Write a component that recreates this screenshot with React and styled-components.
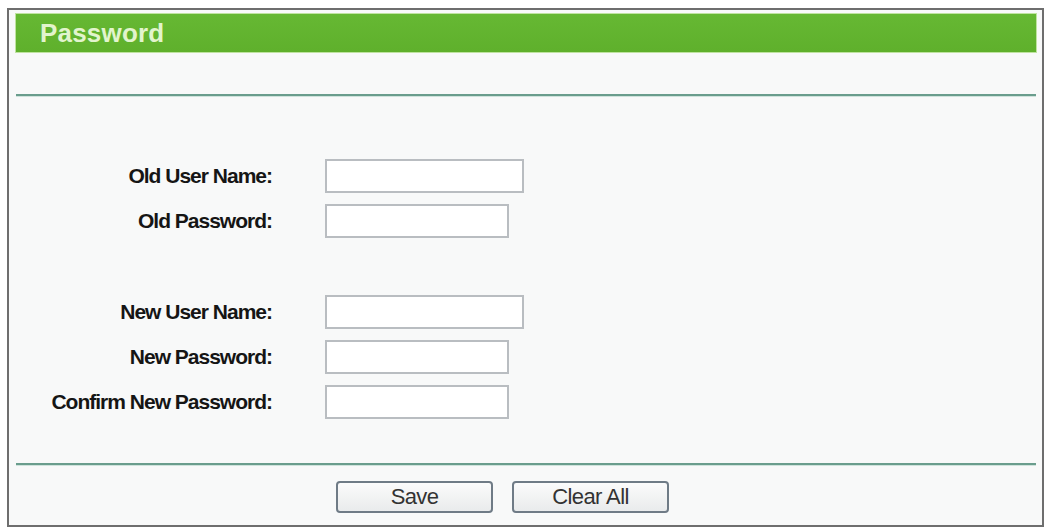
import React from "react";
import styled, { createGlobalStyle } from "styled-components";

const Global = createGlobalStyle`
  html, body { margin: 0; padding: 0; background: #ffffff; }
  body { font-family: "Liberation Sans", Arial, sans-serif; }
`;

const Page = styled.div`
  padding: 8px 4px 2px 7px;
`;

const Panel = styled.div`
  box-sizing: border-box;
  width: 1037px;
  height: 519px;
  border: 2px solid #6e6e6e;
  background: #f8f9f9;
  padding: 4px 6px 12px 7px;
  display: flex;
  flex-direction: column;
`;

const Header = styled.div`
  height: 38px;
  background: linear-gradient(#66b833, #5fb02c);
  box-shadow: 0 0 0 1px #bfe3a0;
  display: flex;
  align-items: center;
  padding-left: 24px;
  font-size: 26px;
  font-weight: bold;
  color: #e2f4cd;
  letter-spacing: 0.2px;
`;

const Divider = styled.div`
  height: 2px;
  background: #6a9d8d;
  box-shadow: 0 1px 0 #cfe3dc;
  margin-top: ${(p) => p.$top}px;
`;

const Form = styled.div`
  margin-top: 63px;
  display: grid;
  grid-template-columns: 256px auto;
  column-gap: 53px;
  row-gap: 11px;
  align-items: center;
`;

const Label = styled.div`
  text-align: right;
  font-size: 21px;
  font-weight: bold;
  color: #151515;
  letter-spacing: -1px;
  margin-top: ${(p) => p.$gap || 0}px;
`;

const Field = styled.input`
  box-sizing: border-box;
  width: ${(p) => p.$w}px;
  height: 34px;
  border: 2px solid #b9bdc1;
  background: #ffffff;
  margin: ${(p) => p.$gap || 0}px 0 0 0;
  padding: 0 4px;
  outline: none;
`;

const ButtonRow = styled.div`
  margin-top: 16px;
  padding-left: 320px;
  display: flex;
  gap: 19px;
`;

const Button = styled.button`
  box-sizing: border-box;
  width: 157px;
  height: 32px;
  border: 2px solid #6f7b86;
  border-radius: 4px;
  background: linear-gradient(#fbfbfb, #e9ebec);
  font-family: "Liberation Sans", Arial, sans-serif;
  font-size: 22px;
  color: #333;
  letter-spacing: -0.6px;
  padding: 0;
`;

const groups = [
  [
    { label: "Old User Name:", w: 199 },
    { label: "Old Password:", w: 184 },
  ],
  [
    { label: "New User Name:", w: 199 },
    { label: "New Password:", w: 184 },
    { label: "Confirm New Password:", w: 184 },
  ],
];

export default function App() {
  return (
    <>
      <Global />
      <Page>
        <Panel>
          <Header>Password</Header>
          <Divider $top={42} />
          <Form>
            {groups.map((g, gi) =>
              g.map((f, fi) => {
                const gap = gi > 0 && fi === 0 ? 46 : 0;
                return (
                  <React.Fragment key={f.label}>
                    <Label $gap={gap}>{f.label}</Label>
                    <Field
                      $w={f.w}
                      $gap={gap}
                      type={f.label.includes("Password") ? "password" : "text"}
                    />
                  </React.Fragment>
                );
              })
            )}
          </Form>
          <Divider $top={44} />
          <ButtonRow>
            <Button>Save</Button>
            <Button>Clear All</Button>
          </ButtonRow>
        </Panel>
      </Page>
    </>
  );
}
